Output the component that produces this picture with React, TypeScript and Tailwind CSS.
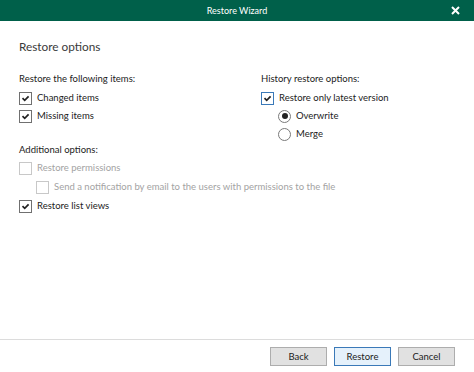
function Check({ checked, disabled, focus }: { checked?: boolean; disabled?: boolean; focus?: boolean }) {
  const border = disabled ? "border-[#c8c8c8]" : focus ? "border-[#3a79b8]" : "border-[#707070]";
  return (
    <span className={`flex h-[13px] w-[13px] shrink-0 items-center justify-center border bg-white ${border}`}>
      {checked && (
        <svg width="9" height="9" viewBox="0 0 9 9">
          <path d="M1.5 4.2 L3.7 6.4 L7.6 2.3" fill="none" stroke="#222" strokeWidth="1.7" />
        </svg>
      )}
    </span>
  );
}

function Radio({ checked }: { checked?: boolean }) {
  return (
    <span className="flex h-[13px] w-[13px] shrink-0 items-center justify-center rounded-full border border-[#7a7a7a] bg-white">
      {checked && <span className="h-[6px] w-[6px] rounded-full bg-[#222]" />}
    </span>
  );
}

function Row({ children, label, disabled, tall }: { children: React.ReactNode; label: string; disabled?: boolean; tall?: boolean }) {
  return (
    <div className={`flex items-center gap-[5px] ${tall ? "h-[19px]" : "h-[18px]"}`}>
      {children}
      <span className={disabled ? "text-[#a3a3a3]" : "text-[#222222]"}>{label}</span>
    </div>
  );
}

export default function App() {
  return (
    <div
      className="flex h-[372px] w-[474px] flex-col bg-white text-[9.5px] text-[#222222]"
      style={{ fontFamily: '"Lato", "Noto Sans", sans-serif' }}
    >
      <div className="relative flex h-[21px] shrink-0 items-center justify-center bg-[#00604a] text-white">
        <span className="text-[9px]">Restore Wizard</span>
        <svg className="absolute right-[14px] top-[6px]" width="9" height="9" viewBox="0 0 9 9">
          <path d="M1 1 L8 8 M8 1 L1 8" stroke="#fff" strokeWidth="2" />
        </svg>
      </div>

      <div className="flex-1 px-[19px]">
        <div className="pt-[18px] text-[11.8px] leading-[16px] text-[#3a3a3a]">Restore options</div>

        <div className="mt-[14px] flex">
          <div className="w-[242px]">
            <div className="h-[20px] leading-[20px]">Restore the following items:</div>
            <Row label="Changed items"><Check checked /></Row>
            <Row label="Missing items"><Check checked /></Row>
          </div>
          <div>
            <div className="h-[20px] leading-[20px]">History restore options:</div>
            <Row label="Restore only latest version"><Check checked focus /></Row>
            <div className="pl-[17px]">
              <Row label="Overwrite"><Radio checked /></Row>
              <Row label="Merge"><Radio /></Row>
            </div>
          </div>
        </div>

        <div className="mt-[-2px]">
          <div className="h-[18px] leading-[18px]">Additional options:</div>
          <Row label="Restore permissions" disabled tall><Check disabled /></Row>
          <div className="pl-[17px]">
            <Row label="Send a notification by email to the users with permissions to the file" disabled tall>
              <Check disabled />
            </Row>
          </div>
          <Row label="Restore list views" tall><Check checked /></Row>
        </div>
      </div>

      <div className="flex h-[33px] shrink-0 items-start justify-end gap-[7px] border-t border-[#dcdcdc] pr-[19px] pt-[7px]">
        <button className="h-[19px] w-[57px] border border-[#adadad] bg-[#e1e1e1] text-[9.5px] leading-none text-[#222]">Back</button>
        <button className="h-[19px] w-[57px] border border-[#3a79b8] bg-[#e5f1fb] text-[9.5px] leading-none text-[#222]">Restore</button>
        <button className="h-[19px] w-[57px] border border-[#adadad] bg-[#e1e1e1] text-[9.5px] leading-none text-[#222]">Cancel</button>
      </div>
    </div>
  );
}
